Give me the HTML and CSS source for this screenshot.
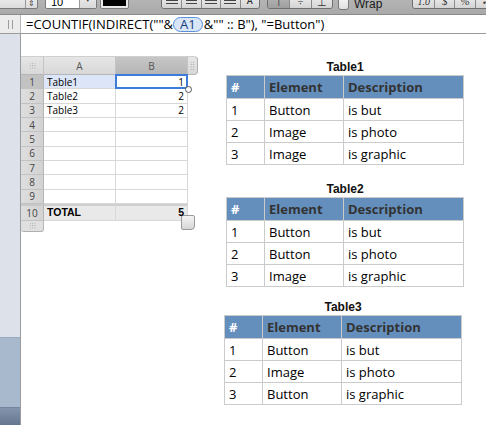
FILE: index.html
```html
<!DOCTYPE html>
<html>
<head>
<meta charset="utf-8">
<link rel="stylesheet" href="styles.css">
</head>
<body>
<div class="app">
  <div class="toolbar">
    <div class="ctl stepbox"><span class="stepper">&#8661;</span></div>
    <div class="ctl sizebox"><span class="sizeval">10</span><span class="sizearrow">&#9662;</span></div>
    <div class="ctl colorwell"><span class="swatch"></span></div>
    <div class="sep"></div>
    <div class="seg seg-align">
      <span class="btn"><i class="lines l-left"></i></span>
      <span class="btn"><i class="lines l-center"></i></span>
      <span class="btn"><i class="lines l-right"></i></span>
      <span class="btn"><i class="lines l-just"></i></span>
      <span class="btn btn-auto">A</span>
    </div>
    <div class="seg seg-valign">
      <span class="btn btn-on">&#8868;</span>
      <span class="btn">&#247;</span>
      <span class="btn">&#8869;</span>
    </div>
    <label class="wrap"><span class="check"></span>Wrap</label>
    <div class="sep sep2"></div>
    <div class="seg seg-num">
      <span class="btn btn-it">1.0</span>
      <span class="btn">$</span>
      <span class="btn">%</span>
      <span class="btn">&#10003;</span>
    </div>
  </div>

  <div class="formula">
    <div class="fgutter"><span class="fgrip"></span></div>
    <div class="ftext">=COUNTIF(INDIRECT(""&amp;<span class="ref">A1</span>&amp;"" :: B"), "=Button")</div>
  </div>

  <div class="main">
    <aside class="sidebar">
      <div class="sb-top"></div>
      <div class="sb-mid"></div>
      <div class="sb-bot"></div>
    </aside>

    <div class="canvas">
      <div class="sheet">
        <div class="corner"><span class="dots"></span></div>
        <div class="colhead">A</div>
        <div class="colhead colhead-sel">B</div>
        <div class="colgrip"><span class="dots dots-v"></span></div>

        <div class="rowhead rowhead-sel">1</div><div class="cell cell-hl">Table1</div><div class="cell num cell-sel">1</div><div class="gap"></div>
        <div class="rowhead">2</div><div class="cell">Table2</div><div class="cell num">2</div><div class="gap"></div>
        <div class="rowhead">3</div><div class="cell">Table3</div><div class="cell num">2</div><div class="gap"></div>
        <div class="rowhead">4</div><div class="cell"></div><div class="cell"></div><div class="gap"></div>
        <div class="rowhead">5</div><div class="cell"></div><div class="cell"></div><div class="gap"></div>
        <div class="rowhead">6</div><div class="cell"></div><div class="cell"></div><div class="gap"></div>
        <div class="rowhead">7</div><div class="cell"></div><div class="cell"></div><div class="gap"></div>
        <div class="rowhead">8</div><div class="cell"></div><div class="cell"></div><div class="gap"></div>
        <div class="rowhead">9</div><div class="cell"></div><div class="cell"></div><div class="gap"></div>
        <div class="rowhead rowhead-total">10</div><div class="cell total">TOTAL</div><div class="cell total num"><span class="over">5</span></div><div class="gap"></div>
        <div class="rowgrip"><span class="dots"></span></div>
        <span class="resize"></span>
      </div>

      <div class="tables">
        <div class="tblock">
          <div class="ttitle">Table1</div>
          <table class="dtable">
            <tr><th class="hnum">#</th><th>Element</th><th>Description</th></tr>
            <tr><td>1</td><td>Button</td><td>is but</td></tr>
            <tr><td>2</td><td>Image</td><td>is photo</td></tr>
            <tr><td>3</td><td>Image</td><td>is graphic</td></tr>
          </table>
        </div>
        <div class="tblock tblock-2">
          <div class="ttitle">Table2</div>
          <table class="dtable">
            <tr><th class="hnum">#</th><th>Element</th><th>Description</th></tr>
            <tr><td>1</td><td>Button</td><td>is but</td></tr>
            <tr><td>2</td><td>Button</td><td>is photo</td></tr>
            <tr><td>3</td><td>Image</td><td>is graphic</td></tr>
          </table>
        </div>
        <div class="tblock tblock-3">
          <div class="ttitle">Table3</div>
          <table class="dtable">
            <tr><th class="hnum">#</th><th>Element</th><th>Description</th></tr>
            <tr><td>1</td><td>Button</td><td>is but</td></tr>
            <tr><td>2</td><td>Image</td><td>is photo</td></tr>
            <tr><td>3</td><td>Button</td><td>is graphic</td></tr>
          </table>
        </div>
      </div>
    </div>
  </div>
</div>
</body>
</html>
```

FILE: styles.css
```css
* { box-sizing: border-box; }
html, body { margin: 0; padding: 0; }
body {
  width: 486px;
  height: 425px;
  overflow: hidden;
  background: #fff;
  font-family: "Open Sans", "Liberation Sans", sans-serif;
  color: #000;
}
.app { display: flex; flex-direction: column; height: 425px; }

/* toolbar */
.toolbar {
  height: 15px;
  flex: none;
  background: linear-gradient(#b4b4b4, #a9a9a9);
  border-bottom: 1px solid #8a8a8a;
  display: flex;
  align-items: flex-end;
  padding-bottom: 5px;
  overflow: hidden;
}
.ctl {
  height: 18px;
  border: 1px solid #7a7a7a;
  border-radius: 0 0 2px 2px;
  flex: none;
}
.stepbox {
  width: 48px;
  margin-left: -10px;
  background: linear-gradient(#f4f4f4, #dcdcdc);
  display: flex;
  justify-content: flex-end;
  align-items: flex-end;
}
.stepper {
  width: 12px;
  border-left: 1px solid #999;
  height: 100%;
  font-size: 8px;
  line-height: 10px;
  color: #444;
  display: flex;
  align-items: flex-end;
  justify-content: center;
}
.sizebox {
  width: 52px;
  margin-left: 7px;
  background: #fff;
  display: flex;
  align-items: flex-end;
  font-family: "Liberation Sans", sans-serif;
  font-size: 11px;
  line-height: 12px;
}
.sizeval { flex: 1; padding-left: 5px; }
.sizearrow {
  width: 17px;
  height: 100%;
  border-left: 1px solid #999;
  background: linear-gradient(#f2f2f2, #d8d8d8);
  font-size: 7px;
  display: flex;
  align-items: flex-end;
  justify-content: center;
  color: #333;
  padding-bottom: 2px;
}
.colorwell {
  width: 29px;
  margin-left: 3px;
  background: #e8e8e8;
  padding: 0 2px 2px;
  display: flex;
}
.swatch { flex: 1; background: #000; }
.sep {
  width: 1px;
  height: 20px;
  background: #8c8c8c;
  margin-left: 15px;
  margin-bottom: -5px;
  box-shadow: 1px 0 0 #c4c4c4;
}
.seg {
  display: flex;
  height: 18px;
  border: 1px solid #6f6f6f;
  border-radius: 0 0 3px 3px;
  overflow: hidden;
  flex: none;
}
.seg .btn {
  height: 100%;
  background: linear-gradient(#f6f6f6, #d4d4d4);
  border-left: 1px solid #8a8a8a;
  display: flex;
  align-items: flex-end;
  justify-content: center;
  font-size: 11px;
  line-height: 11px;
  color: #333;
  padding-bottom: 1px;
}
.seg .btn:first-child { border-left: none; }
.seg-align { margin-left: 17px; width: 99px; }
.seg-align .btn { width: 20%; }
.seg-valign { margin-left: 7px; width: 66px; }
.seg-valign .btn { width: 33.3%; }
.seg .btn-on { background: linear-gradient(#bdbdbd, #9f9f9f); }
.btn-auto { font-family: "Liberation Sans", sans-serif; font-weight: bold; font-size: 9px !important; }
.lines {
  display: block;
  width: 12px;
  height: 9px;
  margin-bottom: 1px;
  background: repeating-linear-gradient(#444 0 1px, transparent 1px 3px);
}
.l-center { width: 11px; }
.wrap {
  display: flex;
  align-items: flex-end;
  margin-left: 5px;
  font-family: "Liberation Sans", sans-serif;
  font-size: 12px;
  line-height: 12px;
  color: #1a1a1a;
  margin-bottom: -1px;
}
.check {
  width: 11px;
  height: 16px;
  border: 1px solid #777;
  border-radius: 0 0 3px 3px;
  background: linear-gradient(#fafafa, #e0e0e0);
  margin-right: 5px;
}
.sep2 { margin-left: 14px; }
.seg-num { margin-left: 16px; width: 84px; margin-right: -8px; }
.seg-num .btn { width: 25%; font-family: "Liberation Serif", serif; font-style: italic; }
.seg-num .btn-it { font-size: 10px; }

/* formula bar */
.formula {
  height: 19px;
  flex: none;
  display: flex;
  border-bottom: 1px solid #9a9a9a;
  background: #fff;
}
.fgutter {
  width: 21px;
  background: #ececec;
  border-right: 1px solid #b8b8b8;
  display: flex;
  align-items: center;
  justify-content: center;
}
.fgrip {
  width: 5px;
  height: 9px;
  border-left: 1px solid #9a9a9a;
  border-right: 1px solid #9a9a9a;
}
.ftext {
  padding-left: 5px;
  font-size: 13px;
  line-height: 18px;
  white-space: nowrap;
  color: #000;
}
.ref {
  display: inline-block;
  padding: 0 6px;
  margin: 0 1px 0 0;
  line-height: 13px;
  height: 15px;
  border: 1px solid #5b8fd8;
  border-radius: 8px;
  background: #d9e6f8;
  color: #173d7a;
}

/* main */
.main { flex: 1; display: flex; min-height: 0; }
.sidebar {
  width: 21px;
  flex: none;
  border-right: 1px solid #9c9c9c;
  display: flex;
  flex-direction: column;
}
.sb-top { flex: 1; background: #dde2ea; }
.sb-mid { height: 70px; background: #a8b8cd; border-top: 1px solid #9aabc2; }
.sb-bot { height: 18px; background: linear-gradient(#8494ad, #66768f); border-top: 1px solid #7585a0; }

.canvas { flex: 1; display: flex; align-items: flex-start; }

/* sheet */
.sheet {
  position: relative;
  margin-top: 22px;
  display: grid;
  grid-template-columns: 23px 72px 72px 10px;
  grid-template-rows: 19px repeat(9, 14.33px) 17px 11px;
  font-size: 10px;
  font-family: "Open Sans", "Liberation Sans", sans-serif;
}
.corner, .colhead, .colgrip {
  background: linear-gradient(#e6e6e6, #d8d8d8);
  border-bottom: 1px solid #b6b6b6;
  border-right: 1px solid #c4c4c4;
  border-top: 1px solid #cfcfcf;
  display: flex;
  align-items: center;
  justify-content: center;
  color: #555;
}
.colhead-sel { background: linear-gradient(#c6c6c6, #b6b6b6); }
.colgrip { border-radius: 0 4px 4px 0; border-right: 1px solid #b0b0b0; }
.dots {
  width: 7px;
  height: 7px;
  background: radial-gradient(circle, #9a9a9a 0.6px, transparent 0.8px) 0 0 / 2.4px 2.4px;
}
.dots-v { width: 5px; height: 9px; }
.rowhead {
  background: linear-gradient(90deg, #dedede, #d2d2d2);
  border-bottom: 1px solid #c2c2c2;
  border-right: 1px solid #b6b6b6;
  display: flex;
  align-items: center;
  justify-content: center;
  color: #444;
}
.rowhead-sel { background: #c2c2c2; }
.rowhead-total { border-top: 2px solid #c8c8c8; }
.rowgrip {
  grid-column: 1;
  background: #e0e0e0;
  border-right: 1px solid #b6b6b6;
  border-bottom: 1px solid #b0b0b0;
  border-radius: 0 0 3px 3px;
  display: flex;
  align-items: center;
  justify-content: center;
}
.cell {
  border-bottom: 1px solid #d8d8d8;
  border-right: 1px solid #d8d8d8;
  padding: 0 3px;
  display: flex;
  align-items: center;
  white-space: nowrap;
  color: #000;
}
.num { justify-content: flex-end; }
.cell-hl { background: #dce6f8; }
.cell-sel { position: relative; }
.cell-sel::before {
  content: "";
  position: absolute;
  left: -1px; top: -1px; right: -1px; bottom: -1px;
  border: 2px solid #3d7bd9;
}
.cell-sel::after {
  content: "";
  position: absolute;
  right: -5px; bottom: -5px;
  width: 5px; height: 5px;
  border: 1px solid #555;
  border-radius: 50%;
  background: #fff;
}
.total {
  background: #e9e9e9;
  border-top: 2px solid #cfcfcf;
  font-weight: bold;
  font-family: "Liberation Sans", sans-serif;
  font-size: 10.5px;
  padding-bottom: 2px;
}
.over { position: relative; z-index: 2; }
.resize {
  position: absolute;
  z-index: 1;
  left: 160px;
  top: 159px;
  width: 14px;
  height: 15px;
  border: 1px solid #9a9a9a;
  border-radius: 2px 2px 4px 2px;
  background: linear-gradient(#f4f4f4, #d6d6d6);
}

/* floating tables */
.tables {
  margin-left: 28px;
  margin-top: 24px;
  display: flex;
  flex-direction: column;
}
.tblock { display: flex; flex-direction: column; align-items: center; }
.tblock-2 { margin-top: 15px; }
.tblock-3 { margin-top: 11px; margin-left: -4px; }
.ttitle {
  font-family: "Liberation Sans", sans-serif;
  font-weight: bold;
  font-size: 12px;
  line-height: 14px;
  height: 17px;
  padding-top: 2px;
  color: #111;
}
.dtable {
  border-collapse: collapse;
  width: 238px;
  font-size: 13px;
}
.dtable th, .dtable td {
  border: 1px solid #cbcbcb;
  padding: 0 0 0 4px;
  text-align: left;
  white-space: nowrap;
}
.dtable th {
  background: #648fbd;
  height: 23px;
  color: #333;
  font-weight: bold;
}
.dtable th.hnum { color: #fff; }
.dtable td { height: 22px; }
.dtable th:nth-child(1), .dtable td:nth-child(1) { width: 38px; }
.dtable th:nth-child(2), .dtable td:nth-child(2) { width: 79px; }
```
